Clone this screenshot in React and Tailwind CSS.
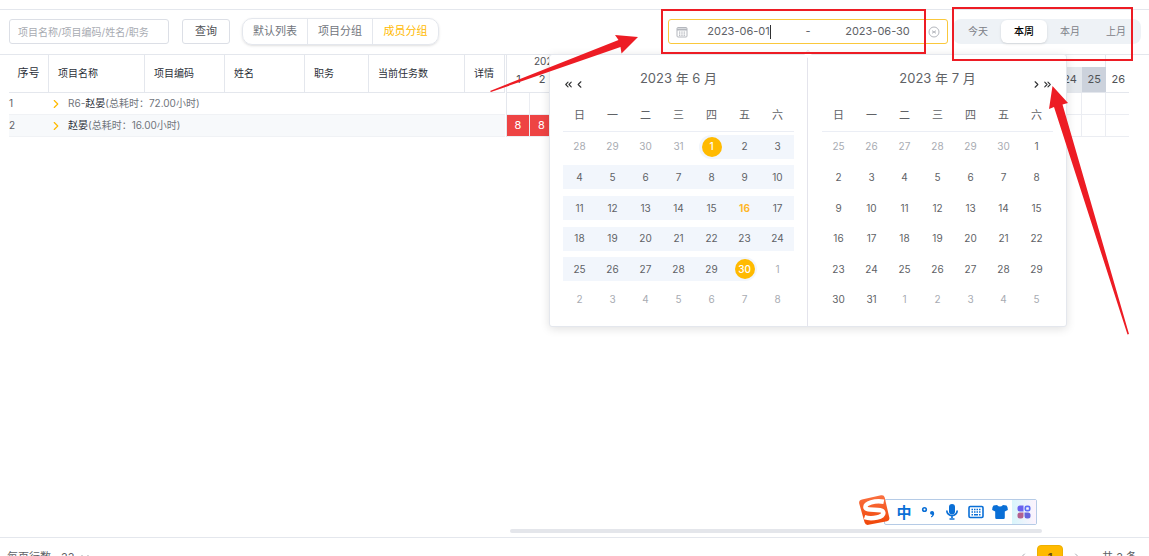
import { useState } from 'react';
import clsx from 'clsx';
import { ChevronDown, ChevronLeft, ChevronRight, ChevronsLeft, ChevronsRight } from 'lucide-react';

const VIEWS = ['默认列表', '项目分组', '成员分组'];
const RANGES = ['今天', '本周', '本月', '上月'];
const WEEKDAYS = ['日', '一', '二', '三', '四', '五', '六'];
const DAYS = Array.from({ length: 26 }, (_, i) => i + 1);

const COLUMNS = [
  { label: '项目名称', width: 'w-24' },
  { label: '项目编码', width: 'w-20' },
  { label: '姓名', width: 'w-20' },
  { label: '职务', width: 'w-16' },
  { label: '当前任务数', width: 'w-24' },
  { label: '详情', width: 'w-10' },
];

const ROWS = [
  { id: 1, prefix: 'R6-', name: '赵晏', hours: '72.00', tasks: {} },
  { id: 2, prefix: '', name: '赵晏', hours: '16.00', tasks: { 1: 8, 2: 8 } },
];

// six weeks, starting `lead` days before the first of the month
const buildWeeks = (lead, prevDays, days) => {
  const cells = Array.from({ length: 42 }, (_, i) => {
    const d = i - lead + 1;
    if (d < 1) return { day: prevDays + d, other: true };
    if (d > days) return { day: d - days, other: true };
    return { day: d, other: false };
  });
  return Array.from({ length: 6 }, (_, w) => cells.slice(w * 7, w * 7 + 7));
};

const Month = ({ title, weeks, side, start, end, today }) => (
  <div className={clsx('pt-3 pr-[13px] pb-[11px]', side === 'left' ? 'border-r border-[#e4e4ec] pl-[13px]' : 'pl-[14px]')}>
    <div className="flex h-6 items-center">
      <div className="flex w-9 items-center text-[#303133]">
        {side === 'left' && (
          <>
            <button type="button" aria-label="上一年" className="mt-2.5"><ChevronsLeft size={11} strokeWidth={2.4} /></button>
            <button type="button" aria-label="上个月" className="mt-2.5"><ChevronLeft size={11} strokeWidth={2.4} /></button>
          </>
        )}
      </div>
      <h2 className="flex-1 text-center text-[13px] text-[#606266]">{title}</h2>
      <div className="flex w-9 items-center justify-end text-[#303133]">
        {side === 'right' && (
          <>
            <button type="button" aria-label="下个月" className="mt-2.5"><ChevronRight size={11} strokeWidth={2.4} /></button>
            <button type="button" aria-label="下一年" className="mt-2.5"><ChevronsRight size={11} strokeWidth={2.4} /></button>
          </>
        )}
      </div>
    </div>
    <table className="mt-2 h-[216px] w-full table-fixed border-collapse text-[#606266]">
      <thead>
        <tr className="h-8 border-b border-[#ebeef5]">
          {WEEKDAYS.map((d) => (
            <th key={d} className="p-0 text-[11px] font-normal">{d}</th>
          ))}
        </tr>
      </thead>
      <tbody>
        {weeks.map((week, w) => (
          <tr key={w}>
            {week.map(({ day, other }) => {
              const isStart = !other && day === start;
              const isEnd = !other && day === end;
              const inRange = !other && start && day >= start && day <= end;
              return (
                <td key={day} className="p-0">
                  <div
                    className={clsx(
                      'flex h-6 items-center justify-center',
                      inRange && 'bg-[#f2f6fc]',
                      isStart && 'ml-1 rounded-l-full pr-1',
                      isEnd && 'mr-1 rounded-r-full pl-1',
                    )}
                  >
                    <button
                      type="button"
                      className={clsx(
                        'size-5 rounded-full text-[10px]',
                        other && 'text-[#a8abb2]',
                        (isStart || isEnd) && 'bg-[#ffba00] font-medium text-white',
                        !other && day === today && 'font-bold text-[#ffb627]',
                      )}
                    >
                      {day}
                    </button>
                  </div>
                </td>
              );
            })}
          </tr>
        ))}
      </tbody>
    </table>
  </div>
);

const DateRange = () => (
  <div className="relative">
    <div className="flex h-[25px] w-[280px] items-center rounded-[3px] border border-[#fac83c] px-[7px] text-[11px] text-[#606266]">
      <svg className="size-3 shrink-0" viewBox="0 0 12 12" fill="none" stroke="#b4b7bd" strokeWidth="1">
        <rect x="1" y="1.5" width="10" height="9.5" rx="1" />
        <path d="M1 3h10M1 4h10" strokeWidth="1.2" />
        <path d="M3.5 5.5v4.5M5.2 5.5v4.5M6.9 5.5v4.5M8.6 5.5v4.5" strokeDasharray="1.2 0.6" />
      </svg>
      <input aria-label="开始日期" defaultValue="2023-06-01" className="ml-1 min-w-0 flex-1 text-center outline-none" />
      <span className="w-[46px] text-center">-</span>
      <input aria-label="结束日期" defaultValue="2023-06-30" className="mr-1 min-w-0 flex-1 text-center outline-none" />
      <button type="button" aria-label="清空">
        <svg className="size-3" viewBox="0 0 12 12" fill="none" stroke="#b4b7bd" strokeWidth="1">
          <circle cx="6" cy="6" r="5" />
          <path d="M4 4.7l4 2.6M8 4.7l-4 2.6" />
        </svg>
      </button>
    </div>
    <span className="absolute top-1.5 left-[102px] h-3.5 w-px bg-[#303133]" />

    <div className="absolute top-[35px] left-1/2 z-10 w-[518px] -translate-x-1/2 rounded-[3px] border border-[#e4e7ed] bg-white shadow-[0_2px_10px_rgba(0,0,0,0.12)]">
      <span className="absolute -top-1 left-1/2 size-1.5 -translate-x-1/2 rotate-45 border-t border-l border-[#e4e7ed] bg-white" />
      <div className="grid grid-cols-2">
        <Month title="2023 年 6 月" side="left" weeks={buildWeeks(4, 31, 30)} start={1} end={30} today={16} />
        <Month title="2023 年 7 月" side="right" weeks={buildWeeks(6, 30, 31)} />
      </div>
    </div>
  </div>
);

const Toolbar = () => {
  const [view, setView] = useState('成员分组');
  const [range, setRange] = useState('本周');

  return (
    <header className="flex h-[45px] shrink-0 items-center border-b border-[#e4e7ed] pr-2 pb-px pl-[9px]">
      <input
        aria-label="搜索"
        placeholder="项目名称/项目编码/姓名/职务"
        className="h-[25px] w-40 rounded-[3px] border border-[#dcdfe6] px-2 text-[10px] outline-none placeholder:text-[#a8abb2]"
      />
      <button type="button" className="ml-[13px] h-[25px] w-12 rounded-[3px] border border-[#dcdfe6] text-[11px] text-[#505256]">查询</button>
      <div className="ml-3 flex h-[27px] divide-x divide-[#e4e7ed] overflow-hidden rounded-[10px] border border-[#e4e7ed] shadow-sm">
        {VIEWS.map((v) => (
          <button
            key={v}
            type="button"
            onClick={() => setView(v)}
            className={clsx('w-[65px] text-[11px]', v === view ? 'text-[#ffba00]' : 'text-[#71757c]')}
          >
            {v}
          </button>
        ))}
      </div>

      <div className="ml-auto flex items-center gap-[5px]">
        <DateRange />
        <div className="flex h-[25px] rounded-lg bg-[#eef2f6] px-0.5 py-px">
          {RANGES.map((r) => (
            <button
              key={r}
              type="button"
              onClick={() => setRange(r)}
              className={clsx(
                'w-[46px] rounded-md text-[10px]',
                r === range ? 'bg-white font-medium text-black shadow-sm' : 'text-[#7c8087]',
              )}
            >
              {r}
            </button>
          ))}
        </div>
      </div>
    </header>
  );
};

const MemberTable = () => (
  <table className="w-[496px] shrink-0 table-fixed border-separate border-spacing-0 text-left text-[10px]">
    <thead>
      <tr className="h-[38px] text-[#2b2f38]">
        <th className="w-10 border-r border-b border-[#e4e7ed] p-0 text-center text-[11px] font-normal">序号</th>
        {COLUMNS.map((c) => (
          <th key={c.label} className={clsx(c.width, 'border-r border-b border-[#e4e7ed] p-0 pl-[9px] font-normal whitespace-nowrap')}>
            {c.label}
          </th>
        ))}
      </tr>
    </thead>
    <tbody>
      {ROWS.map((row) => (
        <tr key={row.id} className="h-[22px] even:bg-[#f7f9fb]">
          <td className="border-b border-[#f0f2f5] p-0 text-[#606266]">{row.id}</td>
          <td colSpan={6} className="border-b border-[#f0f2f5] p-0 text-[#71757c]">
            <div className="flex items-center gap-[5px] whitespace-nowrap">
              <button type="button" aria-label="展开" className="text-[#ffba00]"><ChevronRight size={14} strokeWidth={2} /></button>
              <span>{row.prefix}<span className="text-[#2b2f38]">{row.name}</span>(总耗时：{row.hours}小时)</span>
            </div>
          </td>
        </tr>
      ))}
    </tbody>
  </table>
);

const Timeline = () => (
  <div className="mr-5 ml-px min-w-0 flex-1 overflow-hidden border-l border-[#e4e7ed]">
    <table className="w-[623px] table-fixed border-separate border-spacing-0 text-center text-[11px] text-[#505256]">
      <colgroup>
        {DAYS.map((d) => (
          <col key={d} className={d === 1 ? 'w-[23px]' : 'w-6'} />
        ))}
      </colgroup>
      <thead>
        <tr className="h-3">
          <th colSpan={25} className="border-r border-[#e4e7ed] p-0 pl-[27px] text-left text-[10px] leading-3 font-normal">2023年6月</th>
          <th className="p-0" />
        </tr>
        <tr className="h-[26px]">
          {DAYS.map((d) => (
            <th
              key={d}
              className={clsx(
                'border-b border-[#e4e7ed] p-0 font-normal',
                d === 24 && 'bg-[#e4e8ed]',
                d === 25 && 'bg-[#ccd2dc]',
              )}
            >
              {d}
            </th>
          ))}
        </tr>
      </thead>
      <tbody>
        {ROWS.map((row) => (
          <tr key={row.id} className="h-[22px]">
            {DAYS.map((d) => (
              <td key={d} className={clsx('border-b border-[#ebedf2] p-0 not-last:border-r', row.tasks[d] && 'bg-[#ee4444] text-white')}>
                {row.tasks[d]}
              </td>
            ))}
          </tr>
        ))}
      </tbody>
    </table>
  </div>
);

const Footer = () => (
  <footer className="h-[19px] shrink-0 overflow-hidden border-t border-[#e4e7ed] text-[11px] text-[#606266]">
    <div className="mt-[7px] flex h-6 items-center pr-3 pl-[7px]">
      <label htmlFor="page-size">每页行数</label>
      <select id="page-size" className="ml-2.5 appearance-none outline-none"><option>22</option></select>
      <ChevronDown size={12} className="ml-1 text-[#909399]" />
      <div className="ml-auto flex items-center gap-2">
        <button type="button" aria-label="上一页" className="text-[#a8abb2]"><ChevronLeft size={12} /></button>
        <button type="button" className="h-6 w-[26px] rounded border border-[#eeb000] bg-[#ffba00] font-bold text-[#6b4a10]">1</button>
        <button type="button" aria-label="下一页" className="text-[#a8abb2]"><ChevronRight size={12} /></button>
        <span className="ml-[11px]">共 2 条</span>
      </div>
    </div>
  </footer>
);

// floating input method bar
const ImeBar = () => (
  <div className="absolute right-28 bottom-[31px] z-20 flex h-[26px] w-[153px] items-center rounded-xs border border-[#b5cbe6] bg-white pl-[11px] text-[#0a6fd6]">
    <svg className="absolute -top-[5px] -left-[27px] h-8 w-8" viewBox="0 0 32 32">
      <defs>
        <linearGradient id="ime-logo" x1="0" y1="0" x2="0" y2="1">
          <stop offset="0" stopColor="#fa7040" />
          <stop offset="1" stopColor="#f04608" />
        </linearGradient>
      </defs>
      <path d="M4 4.500L23 .3Q26 -.3 26.700 2.400L31.300 22.600Q32 25.500 29 26.300L10.500 29.800Q7.500 30.300 6.600 27.500L1.200 8.500Q.6 5.300 4 4.500Z" fill="url(#ime-logo)" />
      <path d="M25.800 6.800C17 5 6.800 8.500 7.500 12.500C8.300 16.700 24.500 12.700 25.300 17.600C26 22 14 24.600 6.500 22.200" fill="none" stroke="#fff" strokeWidth="4.500" />
    </svg>
    <span className="w-4 text-center text-[15px] leading-none font-bold">中</span>
    <svg className="ml-2 size-4" viewBox="0 0 16 16" fill="none" stroke="currentColor">
      <circle cx="4.500" cy="5.500" r="1.800" strokeWidth="1.600" />
      <path d="M12 7C14 7 14.500 9 14 10.800Q13.300 13 11 13.500V12.300Q12.200 11.800 12.300 10.800Q10 11 10 9Q10 7 12 7Z" fill="currentColor" stroke="none" />
    </svg>
    <svg className="ml-2 size-4" viewBox="0 0 16 16" fill="none" stroke="currentColor">
      <rect x="5" y="0" width="6" height="10.500" rx="3" fill="currentColor" stroke="none" />
      <path d="M2.800 6.500a5.200 5.200 0 0 0 10.400 0M8 11.700V14M5.500 15h5" strokeWidth="1.700" />
    </svg>
    <svg className="ml-2 size-4" viewBox="0 0 16 16" fill="none" stroke="currentColor">
      <rect x="1" y="2.500" width="14" height="11" rx="1.200" strokeWidth="1.600" />
      <path d="M3.500 5.500h9M3.500 8h9" strokeWidth="1.500" strokeDasharray="1.500 1" />
      <path d="M3.500 10.700h1.500M6 10.700h4M11 10.700h1.500" strokeWidth="1.500" />
    </svg>
    <svg className="ml-2 size-4" viewBox="0 0 16 16" fill="currentColor">
      <path d="M1.500 1.500L5 1Q8 4 11 1L14.500 1.500Q16 3.500 15.800 6L12.800 7.500V13.500Q12.800 15 11.500 15H4.500Q3.200 15 3.200 13.500V7.500L.2 6Q0 3.500 1.500 1.500Z" />
    </svg>
    <div className="ml-1 flex h-6 flex-1 items-center bg-linear-to-r from-[#d8f5fb] to-[#fdf3fd] pl-[5px]">
      <svg className="size-3.5" viewBox="0 0 14 14">
        <path d="M3 .5h3.500v6H3a2.500 2.500 0 0 1-2.500-2.500V3A2.500 2.500 0 0 1 3 .5Z" fill="#6a62ee" />
        <rect x="8.300" y="1.300" width="4.400" height="4.400" rx="1.500" fill="none" stroke="#5d6cf5" strokeWidth="1.700" />
        <path d="M3 7.500h3.500V11A2.500 2.500 0 0 1 4 13.500H3A2.500 2.500 0 0 1 .5 11v-1A2.500 2.500 0 0 1 3 7.500Z" fill="#b3608f" />
        <path d="M7.500 7.500H11a2.500 2.500 0 0 1 2.500 2.500v1a2.500 2.500 0 0 1-2.500 2.500h-1A2.500 2.500 0 0 1 7.500 11Z" fill="#6464dc" />
      </svg>
    </div>
  </div>
);

// red marks drawn over the page
const Annotations = () => (
  <svg className="pointer-events-none absolute top-0 right-0 z-30" width="1149" height="400" viewBox="0 0 1149 400">
    <g fill="none" stroke="#ed1c24" strokeWidth="2">
      <rect x="662" y="10" width="263" height="43" />
      <rect x="953" y="8" width="179" height="52" />
    </g>
    <g fill="#ed1c24">
      <path d="M490 91L618.500 40L615 35L638 37L621.500 53.500L620.500 47L491 92Z" />
      <path d="M1052.500 86L1068 103L1062.500 104.500L1129 334L1127.500 334.500L1054 107L1049 109Z" />
    </g>
  </svg>
);

const App = () => (
  <div className="relative flex h-screen flex-col overflow-hidden bg-white font-['Inter','Noto_Sans_CJK_SC',sans-serif]">
    <div className="h-2.5 shrink-0 border-b border-[#e4e7ed]" />
    <Toolbar />
    <main className="flex min-h-0 flex-1 flex-col">
      <div className="flex flex-1 items-start pl-[9px]">
        <MemberTable />
        <Timeline />
      </div>
      <div className="mr-[107px] mb-1 ml-[510px] h-1 rounded-full bg-[#e4e6eb]" />
    </main>
    <Footer />
    <ImeBar />
    <Annotations />
  </div>
);

export default App;
